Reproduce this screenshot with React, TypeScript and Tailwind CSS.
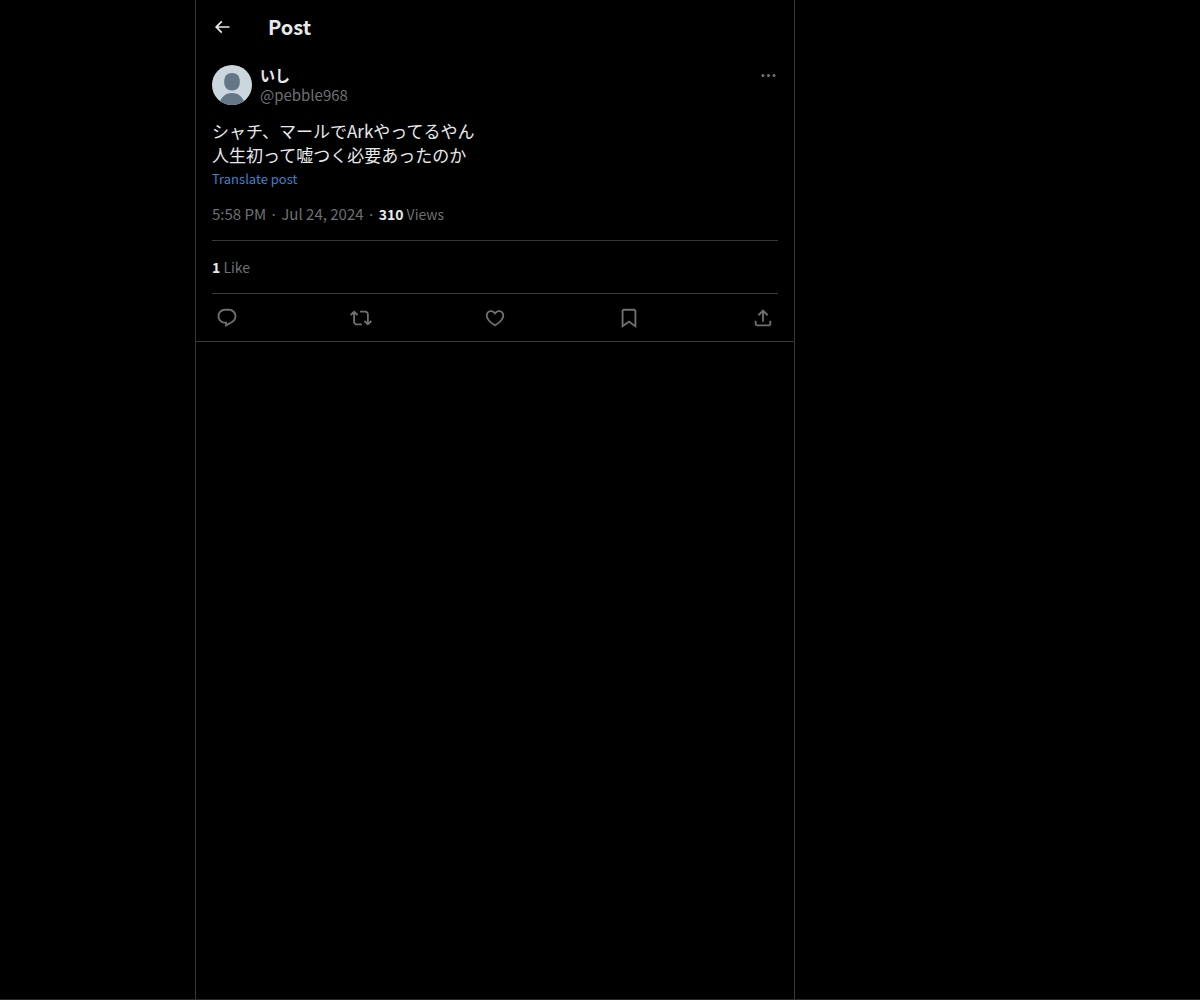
import type { ReactNode } from 'react';

const icons = {
  back: 'M7.414 13l5.043 5.04-1.414 1.42L3.586 12l7.457-7.46 1.414 1.42L7.414 11H21v2H7.414z',
  more: 'M3 12c0-1.1.9-2 2-2s2 .9 2 2-.9 2-2 2-2-.9-2-2zm9 2c1.1 0 2-.9 2-2s-.9-2-2-2-2 .9-2 2 .9 2 2 2zm7 0c1.1 0 2-.9 2-2s-.9-2-2-2-2 .9-2 2 .9 2 2 2z',
  reply:
    'M1.751 10c0-4.42 3.584-8 8.005-8h4.366c4.49 0 8.129 3.64 8.129 8.13 0 2.96-1.607 5.68-4.196 7.11l-8.054 4.46v-3.69h-.067c-4.49.1-8.183-3.51-8.183-8.01zm8.005-6c-3.317 0-6.005 2.69-6.005 6 0 3.37 2.77 6.08 6.138 6.01l.351-.01h1.761v2.3l5.087-2.81c1.951-1.08 3.163-3.13 3.163-5.36 0-3.39-2.744-6.13-6.129-6.13H9.756z',
  repost:
    'M4.5 3.88l4.432 4.14-1.364 1.46L5.5 7.55V16c0 1.1.896 2 2 2H13v2H7.5c-2.209 0-4-1.79-4-4V7.55L1.432 9.48.068 8.02 4.5 3.88zM16.5 6H11V4h5.5c2.209 0 4 1.79 4 4v8.45l2.068-1.93 1.364 1.46-4.432 4.14-4.432-4.14 1.364-1.46 2.068 1.93V8c0-1.1-.896-2-2-2z',
  like: 'M16.697 5.5c-1.222-.06-2.679.51-3.89 2.16l-.805 1.09-.806-1.09C9.984 6.01 8.526 5.44 7.304 5.5c-1.243.07-2.349.78-2.91 1.91-.552 1.12-.633 2.78.479 4.82 1.074 1.97 3.257 4.27 7.129 6.61 3.87-2.34 6.052-4.64 7.126-6.61 1.111-2.04 1.03-3.7.477-4.82-.561-1.13-1.666-1.84-2.908-1.91zm4.187 7.69c-1.351 2.48-4.001 5.12-8.379 7.67l-.503.3-.504-.3c-4.379-2.55-7.029-5.19-8.382-7.67-1.36-2.5-1.41-4.86-.514-6.67.887-1.79 2.647-2.91 4.601-3.01 1.651-.09 3.368.56 4.798 2.01 1.429-1.45 3.146-2.1 4.796-2.01 1.954.1 3.714 1.22 4.601 3.01.896 1.81.846 4.17-.514 6.67z',
  bookmark:
    'M4 4.5C4 3.12 5.119 2 6.5 2h11C18.881 2 20 3.12 20 4.5v18.44l-8-5.71-8 5.71V4.5zM6.5 4c-.276 0-.5.22-.5.5v14.56l6-4.29 6 4.29V4.5c0-.28-.224-.5-.5-.5h-11z',
  share:
    'M12 2.59l5.7 5.7-1.41 1.42L13 6.41V16h-2V6.41l-3.3 3.3-1.41-1.42L12 2.59zM21 15l-.02 3.51c0 1.38-1.12 2.49-2.5 2.49H5.5C4.11 21 3 19.88 3 18.5V15h2v3.5c0 .28.22.5.5.5h12.98c.28 0 .5-.22.5-.5L19 15h2z',
};

function Icon({ name, className }: { name: keyof typeof icons; className: string }) {
  return (
    <svg viewBox="0 0 24 24" fill="currentColor" aria-hidden="true" className={className}>
      <path d={icons[name]} />
    </svg>
  );
}

function Action({ label, name }: { label: string; name: keyof typeof icons }) {
  return (
    <button type="button" aria-label={label} className="flex h-[47px] items-center">
      <Icon name={name} className="size-[22px]" />
    </button>
  );
}

function Stat({ value, children }: { value: string; children: ReactNode }) {
  return (
    <span className="text-sm leading-5">
      <span className="font-bold text-[#e7e9ea]">{value}</span> {children}
    </span>
  );
}

function Avatar() {
  return (
    <svg viewBox="0 0 40 40" className="size-10 shrink-0 rounded-full" role="img" aria-label="Profile picture">
      <rect width="40" height="40" fill="#ccd6dd" />
      <path d="M20 8c5.2 0 7.800 3.200 7.800 8.800 0 5.700-2.900 8.700-7.800 8.700s-7.800-3-7.800-8.700C12.200 11.200 14.800 8 20 8z" fill="#657786" />
      <path d="M7 40c1.500-7.500 6-12 13-12s11.500 4.500 13 12z" fill="#657786" />
    </svg>
  );
}

export default function App() {
  return (
    <div className="flex min-h-screen justify-center border-b border-[#2b2929] bg-black pr-[210px] font-['Noto_Sans_CJK_JP',sans-serif] text-[15px] leading-5 text-[#6e7072]">
      <main className="w-full max-w-[600px] border-x border-[#36383b]">
        <header className="flex h-[53px] items-center gap-9 px-4">
          <button type="button" aria-label="Back" className="text-[#e7e9ea]">
            <Icon name="back" className="size-5" />
          </button>
          <h1 className="text-xl font-bold text-[#e7e9ea]">Post</h1>
        </header>
        <article className="border-b border-[#36383b] px-4 pt-3">
          <div className="flex gap-2">
            <Avatar />
            <div className="grow">
              <div className="font-bold text-[#e7e9ea]">いし</div>
              <div>@pebble968</div>
            </div>
            <button type="button" aria-label="More" className="flex h-5 items-center self-start">
              <Icon name="more" className="size-[19px]" />
            </button>
          </div>
          <p className="mt-3.5 text-[17px] leading-6 text-[#e7e9ea]">
            シャチ、マールでArkやってるやん
            <br />
            人生初って嘘つく必要あったのか
          </p>
          <a href="#translate" className="block text-[13px] leading-6 text-[#3f82c8]">
            Translate post
          </a>
          <div className="mt-[13px] mb-4">
            5:58 PM · Jul 24, 2024 · <Stat value="310">Views</Stat>
          </div>
          <div className="border-y border-[#36383b] py-4">
            <Stat value="1">Like</Stat>
          </div>
          <div className="flex justify-between px-1">
            <Action label="Reply" name="reply" />
            <Action label="Repost" name="repost" />
            <Action label="Like" name="like" />
            <Action label="Bookmark" name="bookmark" />
            <Action label="Share" name="share" />
          </div>
        </article>
      </main>
    </div>
  );
}
